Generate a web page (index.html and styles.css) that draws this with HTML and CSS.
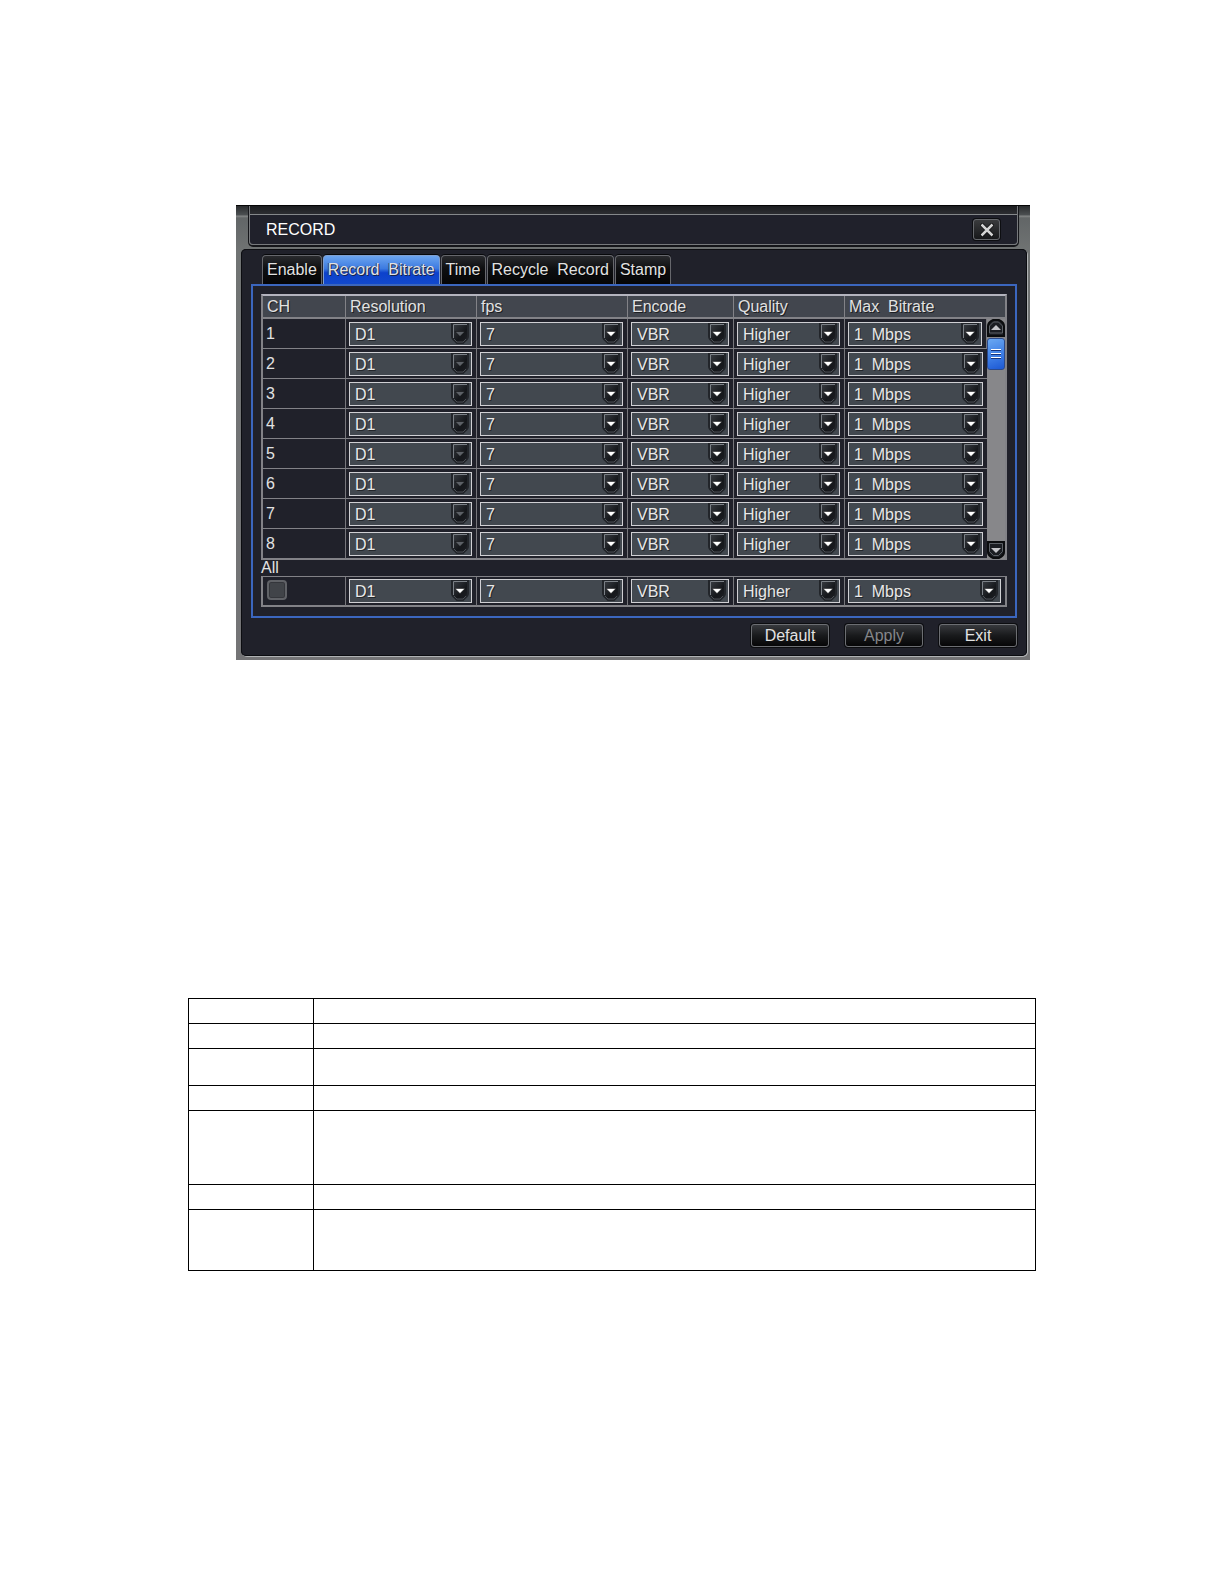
FILE: index.html
```html
<!DOCTYPE html>
<html lang="en">

<head>
    <meta charset="utf-8">
    <meta name="viewport" content="width=device-width, initial-scale=1.0">
    <title>Record</title>
    <link rel="stylesheet" href="styles.css">
</head>

<body>
    <!-- shared icons -->
    <svg class="icons" width="0" height="0" aria-hidden="true">
        <defs>
            <linearGradient id="shade" x1="0" y1="0" x2="1" y2="1">
                <stop offset="0" stop-color="#3c4046" />
                <stop offset="0.6" stop-color="#15171b" />
                <stop offset="1" stop-color="#1e2024" />
            </linearGradient>
        </defs>
        <symbol id="drop" viewBox="0 0 18 21">
            <path d="M1 1h16v12q0 3-3 5l-2 2H6l-2-2q-3-2-3-5z" fill="url(#shade)" stroke="#22252a" stroke-width="2" />
            <path d="M2.5 15V1.5H16" fill="none" stroke="#7b8086" />
            <path d="M3 16l3 3h6l3-3" fill="none" stroke="#4b4f55" />
            <path d="M4 8.500h10l-5 5z" fill="currentColor" stroke="#08090b" stroke-width="0.5" />
        </symbol>
    </svg>

    <main>
        <section class="dialog">
            <header class="titlebar">
                <h1>RECORD</h1>
                <button class="close" type="button" aria-label="Close">
                    <svg width="14" height="14" viewBox="0 0 14 14"><path d="M1 1l12 12M13 1L1 13" stroke="#08090a" stroke-width="4" /><path d="M1.500 1.500l11 11M12.500 1.500l-11 11" stroke="#d4d4d4" stroke-width="2.500" /></svg>
                </button>
            </header>

            <div class="content">
                <nav class="tabs">
                    <button class="tab" type="button">Enable</button>
                    <button class="tab active" type="button">Record&nbsp; Bitrate</button>
                    <button class="tab" type="button">Time</button>
                    <button class="tab" type="button">Recycle&nbsp; Record</button>
                    <button class="tab" type="button">Stamp</button>
                </nav>

                <div class="panel">
                    <table class="grid">
                        <colgroup>
                            <col class="c-ch"><col class="c-res"><col class="c-fps"><col class="c-enc"><col class="c-qua"><col class="c-max"><col class="c-bar">
                        </colgroup>
                        <thead>
                            <tr>
                                <th>CH</th>
                                <th>Resolution</th>
                                <th>fps</th>
                                <th>Encode</th>
                                <th>Quality</th>
                                <th colspan="2">Max&nbsp; Bitrate</th>
                            </tr>
                        </thead>
                        <tbody id="channels"></tbody>
                    </table>

                    <label class="all" for="all">All</label>

                    <table class="grid allgrid">
                        <colgroup>
                            <col class="c-ch"><col class="c-res"><col class="c-fps"><col class="c-enc"><col class="c-qua"><col class="c-max"><col class="c-bar">
                        </colgroup>
                        <tbody id="allrow"></tbody>
                    </table>
                </div>

                <footer class="actions">
                    <button class="btn" type="button">Default</button>
                    <button class="btn" type="button" disabled>Apply</button>
                    <button class="btn" type="button">Exit</button>
                </footer>
            </div>
        </section>

        <table class="notes">
            <tbody>
                <tr><td class="name"></td><td></td></tr>
                <tr><td></td><td></td></tr>
                <tr class="medium"><td></td><td></td></tr>
                <tr><td></td><td></td></tr>
                <tr class="tallest"><td></td><td></td></tr>
                <tr><td></td><td></td></tr>
                <tr class="tall"><td></td><td></td></tr>
            </tbody>
        </table>
    </main>

    <script>
        var fields = [
            ['Resolution', 'D1'],
            ['fps', '7'],
            ['Encode', 'VBR'],
            ['Quality', 'Higher'],
            ['Max Bitrate', '1&nbsp; Mbps']
        ];

        function selectCell(i, row, locked, span) {
            var f = fields[i];
            return '<td' + (span ? ' colspan="2"' : '') + '><div class="pick">' +
                '<select aria-label="' + f[0] + ' ' + row + '"' + (locked ? ' disabled' : '') + '>' +
                '<option>' + f[1] + '</option></select>' +
                '<svg class="arrow" width="18" height="21"><use href="#drop"/></svg></div></td>';
        }

        var scrollbar = '<td class="bar" rowspan="8"><div class="track">' +
            '<button class="step up" type="button" aria-label="Scroll up"><svg width="18" height="18" viewBox="0 0 18 18">' +
            '<path d="M1 17V7q0-3 3-5l2-1h6l2 1q3 2 3 5v10z" fill="#1b1d22" stroke="#0b0c0e" stroke-width="2"/>' +
            '<path d="M2.5 14V7l4-4h5l4 4v7z" fill="none" stroke="#5c6066"/><path d="M4 11h10L9 6z" fill="#c4c4c8"/></svg></button>' +
            '<div class="thumb"></div>' +
            '<button class="step down" type="button" aria-label="Scroll down"><svg width="18" height="18" viewBox="0 0 18 18">' +
            '<path d="M1 1v10q0 3 3 5l2 1h6l2-1q3-2 3-5V1z" fill="#1b1d22" stroke="#0b0c0e" stroke-width="2"/>' +
            '<path d="M2.500 2.500v8l4 4h5l4-4v-8z" fill="none" stroke="#5c6066"/><path d="M4 7h10l-5 5z" fill="#c4c4c8"/></svg></button>' +
            '</div></td>';

        var html = '';
        for (var ch = 1; ch <= 8; ch++) {
            html += '<tr><td class="ch">' + ch + '</td>';
            for (var i = 0; i < fields.length; i++) {
                html += selectCell(i, ch, i == 0, false);
            }
            if (ch == 1) html += scrollbar;
            html += '</tr>';
        }
        document.getElementById('channels').innerHTML = html;

        html = '<tr><td class="ch"><input type="checkbox" id="all"></td>';
        for (i = 0; i < fields.length; i++) {
            html += selectCell(i, 'all', false, i == 4);
        }
        document.getElementById('allrow').innerHTML = html + '</tr>';
    </script>
</body>

</html>
```
FILE: styles.css
```css
* {
    box-sizing: border-box;
}

body {
    margin: 0;
    background: #fff;
    color: #e2e2e2;
    font: 16px/20px "Liberation Sans", Arial, sans-serif;
}

button,
select,
input {
    margin: 0;
    color: inherit;
    font: inherit;
}

.icons {
    position: absolute;
}

main {
    padding: 205px 188px 0;
}

/* dialog frame */
.dialog {
    margin: 0 6px 0 48px;
    padding: 0 3px 4px 5px;
    background: linear-gradient(#2a2c2e 0, #4c5052 9px, #858888 10px, #626667 12px, #707373 45px, #747476 100%);
    border-top: 1px solid #050506;
}

.titlebar {
    display: flex;
    align-items: center;
    justify-content: space-between;
    height: 39px;
    margin: 0 9px 4px 8px;
    padding: 9px 17px 0 16px;
    background: linear-gradient(#1c1d20 0, #2c2d31 8px, #85888a 8px, #85888a 9px, #20212b 9px);
    border: 1px solid #77797c;
    border-top: 0;
    border-radius: 0 0 4px 4px;
    box-shadow: 0 1px 0 1px #141519;
}

.titlebar h1 {
    margin: 0;
    color: #fff;
    font-size: 16px;
    font-weight: normal;
}

.close {
    display: flex;
    align-items: center;
    justify-content: center;
    width: 27px;
    height: 21px;
    padding: 0;
    background: linear-gradient(#3a3b3d, #17181a);
    border: 1px solid #66686c;
    border-radius: 3px;
    box-shadow: 0 0 0 1px #0d0e11;
}

.content {
    padding: 6px 10px 9px;
    background: #20212a;
    border-radius: 5px;
    box-shadow: inset 0 0 0 1px #0c0d11, 1px 1px 0 #b0b2b4;
}

/* tabs */
.tabs {
    display: flex;
    gap: 1px;
    padding-left: 11px;
}

.tab {
    height: 29px;
    padding: 0 4px;
    background: linear-gradient(#292a2d 0, #0e0f11 45%, #050506 100%);
    border: 1px solid #66676c;
    border-bottom: 0;
    border-radius: 4px 4px 0 0;
    box-shadow: 0 -1px 0 #07080a;
    text-shadow: 1px 1px 0 #000;
    white-space: nowrap;
}

.tab.active {
    background: linear-gradient(#6ba4ef 0, #3c7ae0 45%, #0c41cc 60%, #1249cd 100%);
    border-color: #7f9fd0;
    text-shadow: 1px 1px 0 #16234a, -1px 0 0 #2b4680;
}

.panel {
    padding: 8px 8px 9px;
    border: 2px solid #3b66be;
}

/* settings grid */
.grid {
    width: 100%;
    table-layout: fixed;
    border: 2px solid #828287;
    border-top-color: #b4b4be;
    border-bottom-width: 1px;
    border-spacing: 0;
}

.c-ch {
    width: 83px;
}

.c-res {
    width: 131px;
}

.c-enc {
    width: 106px;
}

.c-qua {
    width: 111px;
}

.c-max {
    width: 142px;
}

.c-bar {
    width: 18px;
}

.grid th {
    height: 23px;
    padding: 0 4px;
    background: #42464e;
    border-right: 1px solid #828287;
    border-bottom: 2px solid #828287;
    font-weight: normal;
    text-align: left;
    text-shadow: 1px 1px 0 #1c1e22;
}

.grid td {
    height: 30px;
    padding: 3px 4px 2px 3px;
    border-right: 1px solid #77777c;
    border-bottom: 1px solid #828287;
}

.grid th:last-child,
.grid td:last-child {
    border-right: 0;
}

.grid td.ch {
    padding-top: 0;
    padding-bottom: 0;
    vertical-align: top;
    line-height: 29px;
}

.grid td.bar {
    padding: 0;
    border-bottom: 0;
}

.pick {
    position: relative;
    height: 24px;
}

.pick select {
    display: block;
    width: 100%;
    height: 24px;
    padding: 1px 22px 0 5px;
    appearance: none;
    background: #42484f;
    border: 1px solid #d0d0d4;
    border-radius: 0;
    color: #e8e8e8;
    opacity: 1;
    text-shadow: 1px 1px 0 #24272b;
}

/* arrow sits over the right end of the select */
.arrow {
    position: absolute;
    top: 1px;
    right: 3px;
    color: #fff;
    pointer-events: none;
}

select:disabled + .arrow {
    color: #5c6066;
}

.all {
    display: block;
    line-height: 16px;
}

.allgrid {
    border-top: 1px solid #828287;
}

.allgrid td {
    height: 29px;
    padding-top: 2px;
}

.allgrid td.ch {
    padding: 3px 4px;
    line-height: 0;
}

.allgrid input {
    width: 20px;
    height: 20px;
    appearance: none;
    background: #414449;
    border: 2px solid #606267;
    border-radius: 4px;
    box-shadow: inset 0 0 0 1px #34363b;
}

/* scrollbar */
.track {
    display: flex;
    flex-direction: column;
    height: 240px;
    background: #87878a;
}

.step {
    height: 18px;
    padding: 0;
    background: none;
    border: 0;
    line-height: 0;
}

.step.down {
    margin-top: auto;
}

.thumb {
    height: 32px;
    margin: 1px 0;
    padding: 10px 3px;
    background: linear-gradient(160deg, #6aa8f2, #3a7ae4 60%, #1c58d4);
    border: 1px solid #2b4a8c;
    border-radius: 3px;
}

.thumb::before {
    content: "";
    display: block;
    height: 10px;
    background: repeating-linear-gradient(#fff 0, #fff 1px, #16337c 1px, #16337c 2px, transparent 2px, transparent 4px);
}

/* bottom buttons */
.actions {
    display: flex;
    justify-content: flex-end;
    gap: 16px;
    padding-top: 6px;
}

.btn {
    width: 78px;
    height: 23px;
    padding: 0;
    background: linear-gradient(#37393d 0, #191a1c 50%, #060607 100%);
    border: 1px solid #6c6e72;
    border-radius: 3px;
    box-shadow: 0 0 0 1px #0c0d10;
    line-height: 20px;
}

.btn:disabled {
    color: #85868a;
}

/* empty notes table under the dialog */
.notes {
    width: 100%;
    margin-top: 338px;
    border-collapse: collapse;
}

.notes td {
    height: 25px;
    padding: 0;
    border: 1px solid #000;
}

.notes .name {
    width: 125px;
}

.notes .medium td {
    height: 37px;
}

.notes .tall td {
    height: 61px;
}

.notes .tallest td {
    height: 74px;
}
```
